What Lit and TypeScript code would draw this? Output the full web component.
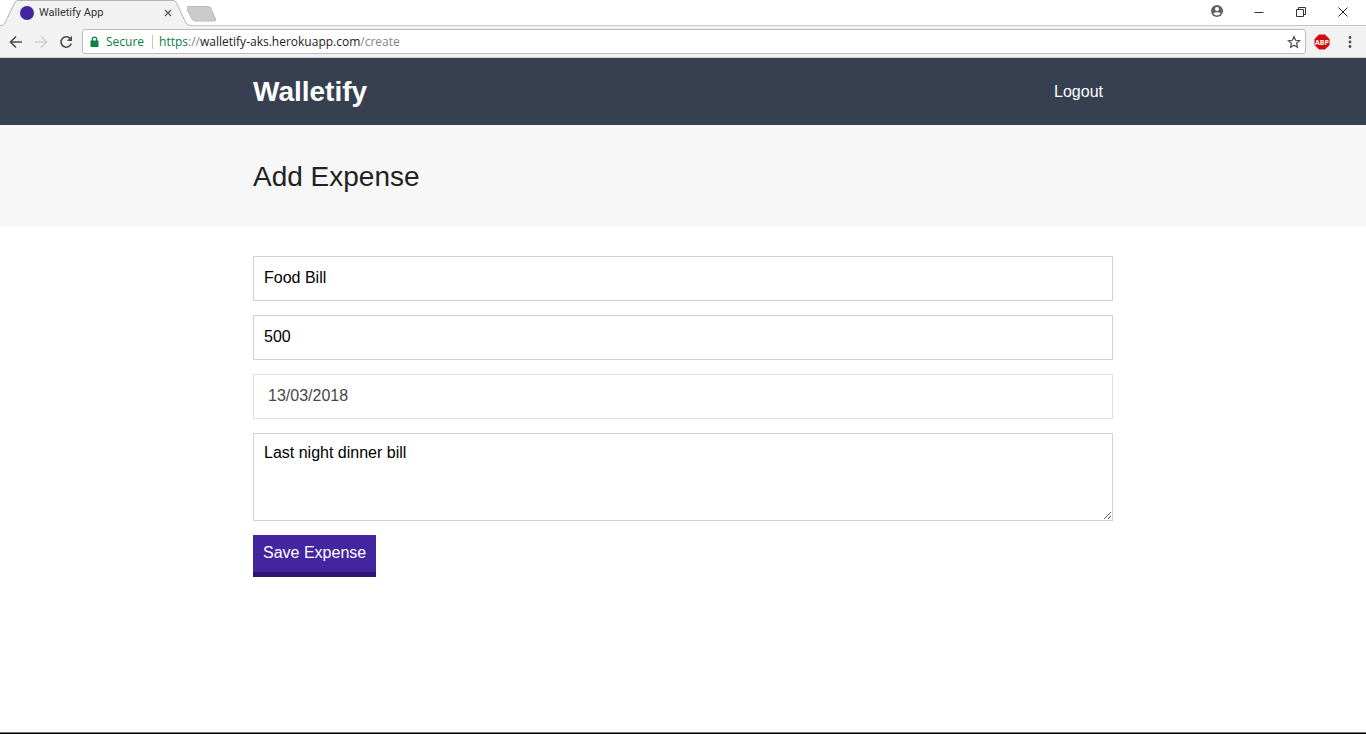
import { LitElement, html, css } from "lit";
import { customElement } from "lit/decorators.js";

@customElement("browser-chrome")
class BrowserChrome extends LitElement {
  static styles = css`
    :host {
      display: block;
      font-family: "Open Sans", "Noto Sans", sans-serif;
      color: #333;
    }
    svg {
      display: block;
    }
    button {
      display: flex;
      align-items: center;
      justify-content: center;
      flex: none;
      padding: 0;
      border: 0;
      background: none;
      font: inherit;
    }
    .strip {
      display: flex;
      height: 26px;
      background: #fff;
      box-shadow: inset 0 -1px #c4c4c4;
    }
    .tab {
      position: relative;
      display: flex;
      align-items: center;
      flex: none;
      box-sizing: border-box;
      width: 187px;
      height: 26px;
      padding: 0 12px 0 20px;
    }
    .shape {
      position: absolute;
      left: 0;
      top: 0;
    }
    .favicon {
      position: relative;
      width: 14px;
      height: 14px;
      border-radius: 50%;
      background: #4325a0;
    }
    .title {
      position: relative;
      flex: 1;
      margin-left: 5px;
      font-size: 11px;
      line-height: 26px;
      font-family: Roboto, "Open Sans", sans-serif;
    }
    .close {
      position: relative;
      width: 14px;
      height: 26px;
    }
    .new-tab {
      height: 26px;
    }
    .window {
      display: flex;
      align-items: center;
      height: 24px;
      margin-left: auto;
      padding-right: 2px;
    }
    .window button {
      width: 42px;
      height: 24px;
    }
    .bar {
      display: flex;
      align-items: center;
      height: 32px;
      box-sizing: border-box;
      padding: 0 8px 0 6px;
      background: #f2f2f2;
      border-bottom: 1px solid #d0d0d0;
    }
    .nav {
      width: 25px;
      height: 24px;
      padding-right: 6px;
    }
    .omnibox {
      display: flex;
      align-items: center;
      flex: 1;
      min-width: 0;
      height: 25px;
      box-sizing: border-box;
      margin-left: 1px;
      padding: 0 4px 0 7px;
      border: 1px solid #bcbcbc;
      border-radius: 3px;
      background: #fff;
      font-size: 12px;
      line-height: 22px;
    }
    .secure {
      margin-left: 7px;
      padding-right: 8px;
      color: #0b8043;
    }
    .rule {
      width: 1px;
      height: 14px;
      background: #c6c6c6;
    }
    .url {
      flex: 1;
      margin-left: 6px;
      color: #222;
      white-space: nowrap;
    }
    .scheme {
      color: #0b8043;
    }
    .dim {
      color: #858585;
    }
    .abp {
      width: 32px;
      height: 24px;
    }
    .more {
      width: 16px;
      height: 24px;
      margin-left: 4px;
    }
  `;

  render() {
    return html`
      <div class="strip">
        <div class="tab">
          <svg class="shape" width="192" height="26" viewBox="0 0 192 26">
            <path d="M0 26V25.500H1Q4 25.500 5 23L14.500 3Q15.500 .5 18 .5H173Q175.500 .5 176.500 3L185.500 22Q187 25.500 190 25.500V26Z" fill="#f2f2f2" />
            <path d="M0 25.500H1Q4 25.500 5 23L14.500 3Q15.500 .5 18 .5H173Q175.500 .5 176.500 3L185.500 22Q187 25.500 190 25.500" fill="none" stroke="#b5b5b5" />
          </svg>
          <span class="favicon"></span>
          <span class="title">Walletify App</span>
          <button class="close" aria-label="Close tab">
            <svg width="8" height="8" viewBox="0 0 8 8"><path d="M1 1l6 6M7 1l-6 6" stroke="#555" stroke-width="1.200" /></svg>
          </button>
        </div>
        <button class="new-tab" aria-label="New tab">
          <svg width="30" height="26" viewBox="0 0 30 26"><path d="M1.500 6.500H21.500Q23 6.500 24 8.500L28.500 19Q29 21 27 21H8Q6 21 5 19L-.5 8.500Q-.5 6.500 1.500 6.500Z" fill="#cbcbcb" stroke="#bababa" /></svg>
        </button>
        <div class="window">
          <button aria-label="Profile">
            <svg width="14" height="14" viewBox="0 0 14 14"><circle cx="7" cy="6" r="6" fill="#616161" /><circle cx="7" cy="4" r="2" fill="#fff" /><path d="M3.200 8.600Q7 5.800 10.800 8.600Q7 12.600 3.200 8.600Z" fill="#fff" /></svg>
          </button>
          <button aria-label="Minimize">
            <svg width="10" height="10" viewBox="0 0 10 10"><path d="M0.500 5.500h9" stroke="#333" /></svg>
          </button>
          <button aria-label="Restore">
            <svg width="10" height="10" viewBox="0 0 10 10" fill="none" stroke="#333"><path d="M.5 2.500h7v7h-7zM2.500 2.500v-2h7v7h-2" /></svg>
          </button>
          <button aria-label="Close">
            <svg width="10" height="10" viewBox="0 0 10 10"><path d="M.5 .5l9 9M9.500 .5l-9 9" stroke="#222" /></svg>
          </button>
        </div>
      </div>
      <div class="bar">
        <button class="nav" aria-label="Back">
          <svg width="14" height="14" viewBox="0 0 14 14" fill="none" stroke="#4d4d4d" stroke-width="1.600"><path d="M13 7H2M7 1.500L1.500 7L7 12.500" /></svg>
        </button>
        <button class="nav" aria-label="Forward">
          <svg width="14" height="14" viewBox="0 0 14 14" fill="none" stroke="#cfcfcf" stroke-width="1.600"><path d="M1 7H12M7 1.500L12.500 7L7 12.500" /></svg>
        </button>
        <button class="nav" aria-label="Reload">
          <svg width="14" height="14" viewBox="0 0 14 14"><path d="M11.200 3.600A5.200 5.200 0 1 0 12.200 8.500" fill="none" stroke="#4d4d4d" stroke-width="1.600" /><path d="M13 .8V6H7.800Z" fill="#4d4d4d" /></svg>
        </button>
        <div class="omnibox">
          <svg width="9" height="12" viewBox="0 0 9 12"><rect x=".5" y="4.500" width="8" height="6.500" rx=".8" fill="#0b8043" /><path d="M2.300 5V3.300a2.200 2.200 0 0 1 4.400 0V5" fill="none" stroke="#0b8043" stroke-width="1.200" /></svg>
          <span class="secure">Secure</span>
          <span class="rule"></span>
          <span class="url"><span class="scheme">https</span><span class="dim">://</span>walletify-aks.herokuapp.com<span class="dim">/create</span></span>
          <button aria-label="Bookmark">
            <svg width="14" height="14" viewBox="0 0 14 14"><path d="M7 1.600L8.600 5.300L12.600 5.700L9.600 8.300L10.500 12.300L7 10.200L3.500 12.300L4.400 8.300L1.400 5.700L5.400 5.300Z" fill="none" stroke="#4d4d4d" stroke-width="1.200" /></svg>
          </button>
        </div>
        <button class="abp" aria-label="Adblock Plus">
          <svg width="16" height="16" viewBox="0 0 16 16"><path d="M5 .5h6L15.500 5v6L11 15.500H5L.5 11V5Z" fill="#d40b0b" /><text x="8" y="10.500" text-anchor="middle" font-family="Open Sans, sans-serif" font-size="7" font-weight="700" fill="#fff">ABP</text></svg>
        </button>
        <button class="more" aria-label="Menu">
          <svg width="4" height="14" viewBox="0 0 4 14" fill="#4d4d4d"><circle cx="2" cy="2.500" r="1.400" /><circle cx="2" cy="7" r="1.400" /><circle cx="2" cy="11.500" r="1.400" /></svg>
        </button>
      </div>
    `;
  }
}

@customElement("expense-form")
class ExpenseForm extends LitElement {
  static styles = css`
    :host {
      display: block;
    }
    form {
      display: flex;
      flex-direction: column;
      align-items: flex-start;
      gap: 14px;
    }
    label {
      display: block;
      width: 100%;
    }
    .field {
      display: block;
      width: 100%;
      box-sizing: border-box;
      height: 45px;
      margin: 0;
      padding: 0 10px 2px;
      border: 1px solid #d3d3d3;
      border-radius: 0;
      background: #fff;
      color: #000;
      font: 16px "Liberation Sans", Arial, sans-serif;
      outline: none;
    }
    .date {
      padding-left: 14px;
      border-color: #e2e2e2;
      color: #484848;
    }
    .note {
      height: 88px;
      padding: 10px;
      resize: vertical;
    }
    .save {
      height: 42px;
      padding: 0 10px 1px;
      border: 0;
      border-bottom: 5px solid #2f1672;
      background: #4325a0;
      color: #fff;
      font: 16px "Liberation Sans", Arial, sans-serif;
    }
  `;

  render() {
    return html`
      <form @submit=${(e: Event) => e.preventDefault()}>
        <label><input class="field" type="text" aria-label="Description" .value=${"Food Bill"} /></label>
        <label><input class="field" type="text" aria-label="Amount" .value=${"500"} /></label>
        <label><input class="field date" type="text" aria-label="Date" .value=${"13/03/2018"} /></label>
        <label><textarea class="field note" aria-label="Note" .value=${"Last night dinner bill"}></textarea></label>
        <button class="save">Save Expense</button>
      </form>
    `;
  }
}

@customElement("app-root")
class AppRoot extends LitElement {
  static styles = css`
    :host {
      display: flex;
      flex-direction: column;
      min-height: 100vh;
      background: #fff;
      font-family: "Liberation Sans", Arial, sans-serif;
      font-size: 16px;
      color: #222;
    }
    .container {
      box-sizing: border-box;
      width: 100%;
      max-width: 860px;
      margin: 0 auto;
    }
    .header {
      background: #364051;
    }
    .header .container {
      display: flex;
      align-items: center;
      justify-content: space-between;
      height: 67px;
    }
    .brand {
      color: #fff;
      font-size: 28px;
      font-weight: 700;
      line-height: 32px;
      text-decoration: none;
    }
    .logout {
      padding: 0 10px;
      border: 0;
      background: none;
      color: #fff;
      font: inherit;
      line-height: 20px;
    }
    .heading {
      padding: 36px 0 34px;
      background: #f7f7f7;
    }
    h1 {
      margin: 0;
      font-size: 28px;
      font-weight: 400;
      line-height: 32px;
    }
    main {
      flex: 1;
      padding: 29px 0;
    }
    .edge {
      height: 1px;
      border-top: 1px solid #777;
      background: #000;
    }
  `;

  render() {
    return html`
      <browser-chrome></browser-chrome>
      <header class="header">
        <div class="container">
          <a class="brand" href="#">Walletify</a>
          <button class="logout">Logout</button>
        </div>
      </header>
      <div class="heading">
        <div class="container"><h1>Add Expense</h1></div>
      </div>
      <main>
        <div class="container"><expense-form></expense-form></div>
      </main>
      <div class="edge"></div>
    `;
  }
}
